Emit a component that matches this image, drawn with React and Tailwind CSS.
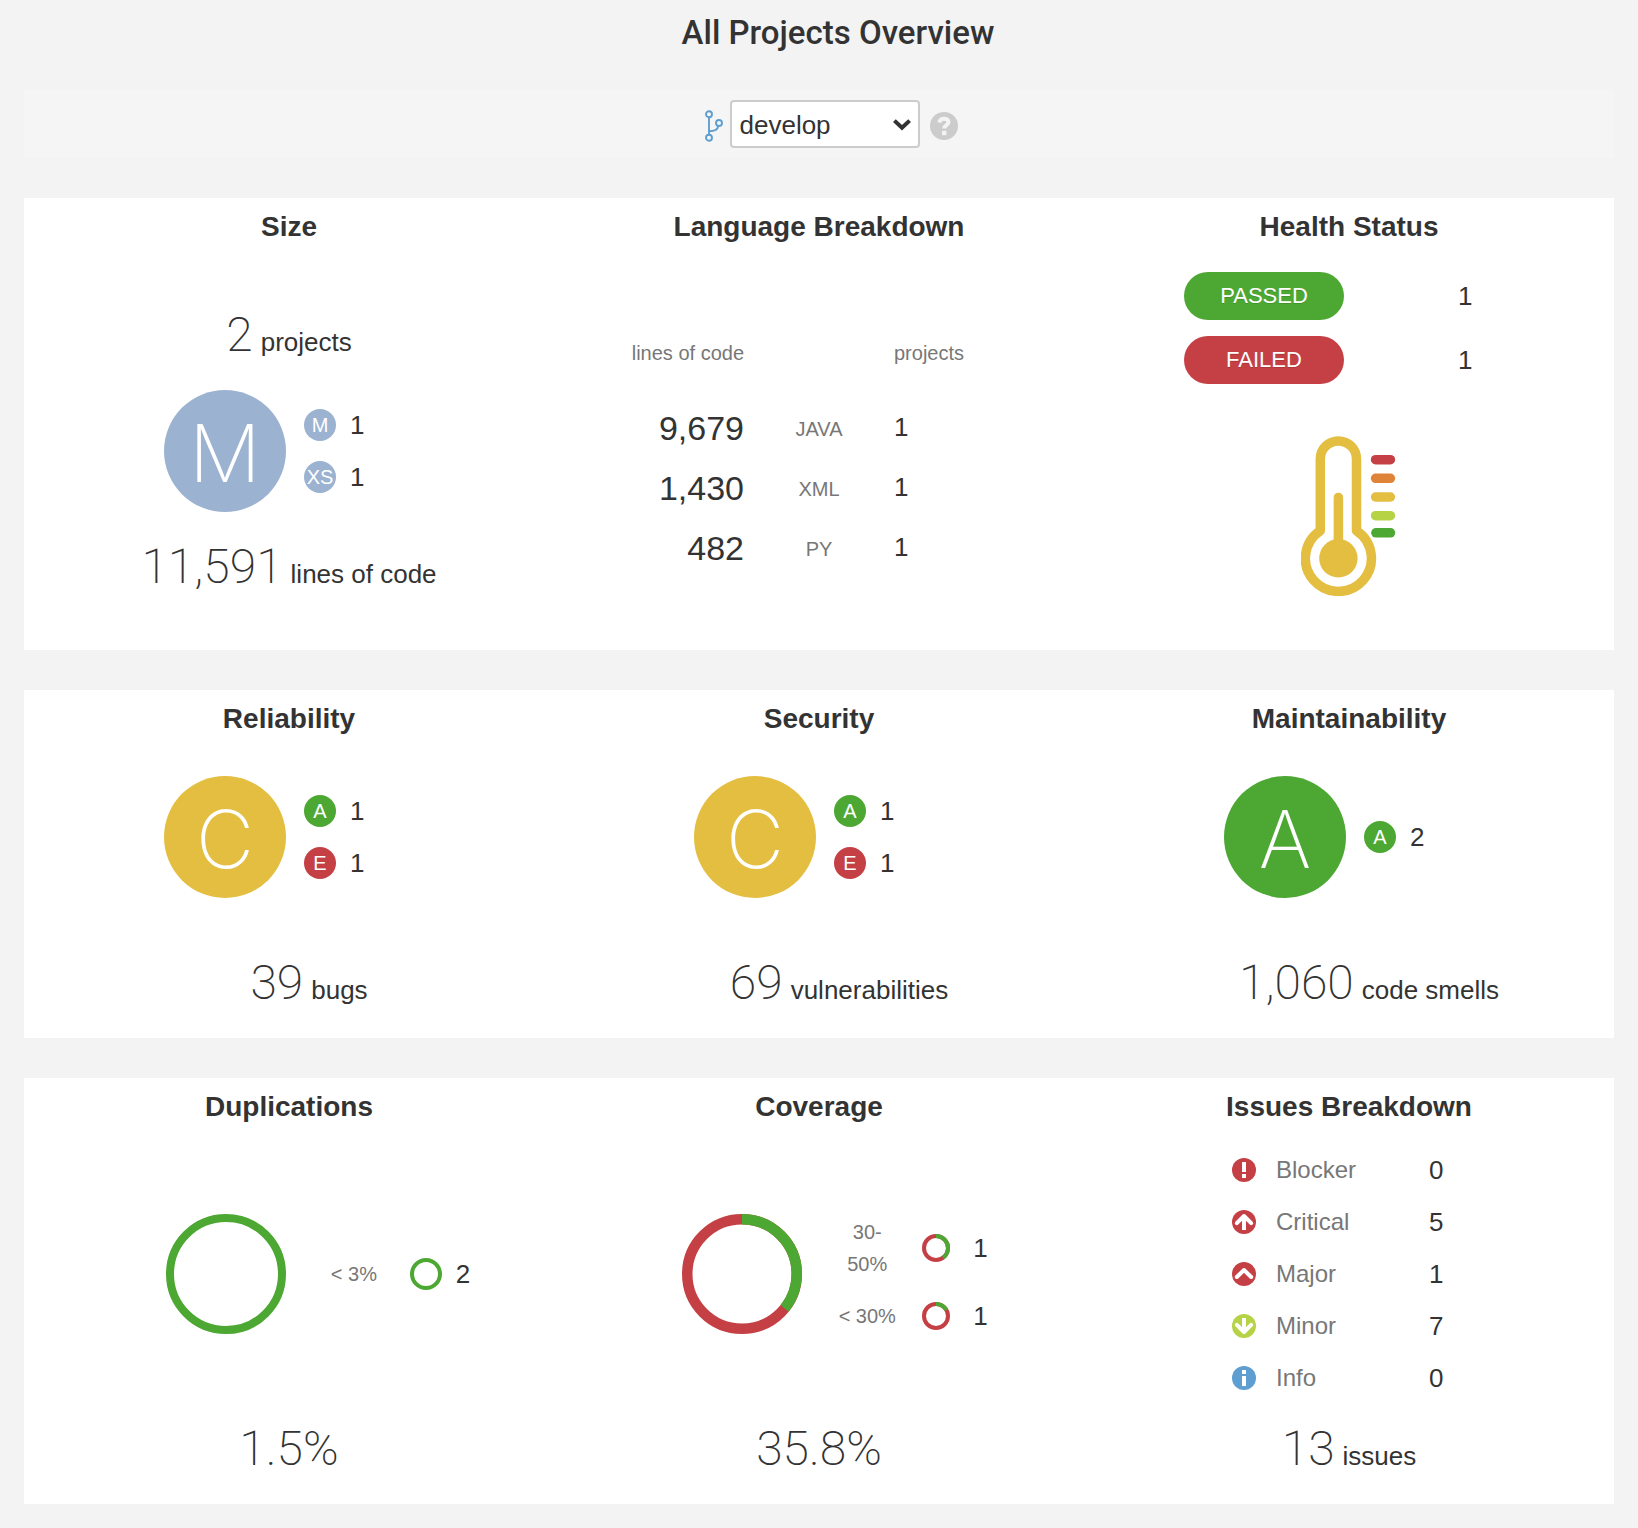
import React from "react";

const LETTER = "font-['Inter',sans-serif] font-extralight";
const NUMBER = "font-['Roboto',sans-serif] font-extralight";

function Panel({ children }) {
  return (
    <section className="grid grid-cols-3 bg-white pt-[11px] pb-[31px]">{children}</section>
  );
}

function Column({ title, children }) {
  return (
    <div className="flex flex-col items-center">
      <h2 className="text-[28px] leading-9 font-bold">{title}</h2>
      {children}
    </div>
  );
}

function Total({ value, unit, className = "" }) {
  return (
    <p className={`flex items-baseline justify-center gap-2 text-[26px] leading-8 whitespace-nowrap ${className}`}>
      <span className={`${NUMBER} text-[48px] leading-[48px]`}>{value}</span>
      {unit && <span>{unit}</span>}
    </p>
  );
}

const gradeColors = {
  A: "bg-[#4ca832]",
  C: "bg-[#e4be41]",
  E: "bg-[#c54045]",
  M: "bg-[#9bb2d1]",
  XS: "bg-[#9bb2d1]",
};

function Ratings({ grade, items }) {
  return (
    <div className="flex w-[250px] items-center gap-[18px]">
      <div
        className={`flex size-[122px] shrink-0 items-center justify-center rounded-full pt-[3px] text-[80px] leading-none text-white ${LETTER} ${gradeColors[grade]}`}
      >
        {grade}
      </div>
      <ul className="flex flex-col gap-5">
        {items.map(([letter, count]) => (
          <li key={letter} className="flex items-center gap-[14px]">
            <span
              className={`flex size-8 items-center justify-center rounded-full text-[20px] leading-8 text-white ${gradeColors[letter]}`}
            >
              {letter}
            </span>
            <span className="text-[26px] leading-8">{count}</span>
          </li>
        ))}
      </ul>
    </div>
  );
}

function Ring({ size, stroke, percent }) {
  const r = (size - stroke) / 2;
  const c = size / 2;
  return (
    <svg width={size} height={size} viewBox={`0 0 ${size} ${size}`} fill="none" className="shrink-0">
      <circle cx={c} cy={c} r={r} stroke="#c54045" strokeWidth={percent < 100 ? stroke : 0} />
      <circle
        cx={c}
        cy={c}
        r={r}
        stroke="#4ca832"
        strokeWidth={stroke}
        pathLength="100"
        strokeDasharray={percent < 100 ? `${percent} ${100 - percent}` : undefined}
        transform={`rotate(-90 ${c} ${c})`}
      />
    </svg>
  );
}

function Thermometer() {
  return (
    <svg width="96" height="160" viewBox="0 0 96 160" fill="none" strokeLinecap="round" strokeLinejoin="round">
      <g stroke="#e4be41" strokeWidth="9.5">
        <path d="M19.3 94.8V23a18.1 18.1 0 0 1 36.2 0v71.8a33 33 0 1 1-36.2 0Z" />
        <path d="M37.4 61.4V122" />
      </g>
      <circle cx="37.4" cy="122.3" r="19.2" fill="#e4be41" />
      <g strokeWidth="9.5">
        <path d="M74.6 23.7h14.8" stroke="#c54045" />
        <path d="M74.6 42.3h14.8" stroke="#df8338" />
        <path d="M74.6 61h14.8" stroke="#e4be41" />
        <path d="M74.6 79.7h14.8" stroke="#b6d345" />
        <path d="M74.9 96.8h14.6" stroke="#4ca832" />
      </g>
    </svg>
  );
}

function BranchIcon() {
  return (
    <svg className="mt-1" width="18" height="32" viewBox="0 0 18 32" fill="none" stroke="#5f9ed0" strokeWidth="1.9">
      <circle cx="4" cy="4.2" r="3" />
      <circle cx="4" cy="27.8" r="3" />
      <circle cx="14" cy="13" r="3" />
      <path d="M4 7.2v17.6M4 21.3c5.200 0 8.800-1.300 9.300-5.400" />
    </svg>
  );
}

function SeverityIcon({ type }) {
  const fills = {
    Blocker: "#c54045",
    Critical: "#c54045",
    Major: "#c54045",
    Minor: "#b6d345",
    Info: "#5f9ed0",
  };
  return (
    <svg width="24" height="24" viewBox="0 0 24 24" fill="none">
      <circle cx="12" cy="12" r="12" fill={fills[type]} />
      {type === "Blocker" && <path d="M10 4h4v10h-4zM10 16h4v4h-4z" fill="#fff" />}
      {type === "Info" && <path d="M10 4h4v4h-4zM10 10h4v10h-4z" fill="#fff" />}
      {type === "Critical" && (
        <g stroke="#fff" strokeWidth="4" strokeLinejoin="round">
          <path d="M12 20V7" />
          <path d="M4.800 13.200L12 6L19.200 13.200" strokeLinecap="round" />
        </g>
      )}
      {type === "Major" && (
        <path d="M4.800 15L12 8L19.200 15" stroke="#fff" strokeWidth="4" strokeLinecap="round" strokeLinejoin="round" />
      )}
      {type === "Minor" && (
        <g stroke="#fff" strokeWidth="4" strokeLinejoin="round">
          <path d="M12 4V17" />
          <path d="M4.800 10.800L12 18L19.200 10.800" strokeLinecap="round" />
        </g>
      )}
    </svg>
  );
}

const languages = [
  ["9,679", "JAVA", 1],
  ["1,430", "XML", 1],
  ["482", "PY", 1],
];

const issues = [
  ["Blocker", 0],
  ["Critical", 5],
  ["Major", 1],
  ["Minor", 7],
  ["Info", 0],
];

export default function App() {
  return (
    <main className="min-h-screen bg-[#f3f3f3] px-6 pb-6 font-['Liberation_Sans',Arial,sans-serif] text-[#333]">
      <h1 className="pt-[15px] pl-[38px] text-center font-['Roboto',sans-serif] text-[33px] leading-9 font-medium">
        All Projects Overview
      </h1>

      <div className="mt-[38px] flex items-center justify-center bg-[#f5f5f5] pt-[11px] pb-[10px] pl-6">
        <BranchIcon />
        <div className="relative ml-[7px]">
          <select
            aria-label="Branch"
            defaultValue="develop"
            className="h-12 w-[190px] appearance-none rounded-[4px] border-2 border-[#ccc] bg-white pt-0.5 pl-2 text-[26px] leading-8"
          >
            <option>develop</option>
            <option>master</option>
          </select>
          <svg
            className="pointer-events-none absolute top-[18px] right-2"
            width="20"
            height="14"
            viewBox="0 0 20 14"
            fill="none"
            stroke="#333"
            strokeWidth="4"
          >
            <path d="M2.400 2.600L10 9.800L17.600 2.600" />
          </svg>
        </div>
        <button type="button" aria-label="Help" className="mt-1 ml-[10px]">
          <svg width="28" height="28" viewBox="0 0 28 28" fill="none">
            <circle cx="14" cy="14" r="14" fill="#ccc" />
            <path
              d="M9.200 10.400C9.900 7.800 11.600 6.700 14 6.700C16.600 6.700 18.500 8 18.500 10.200C18.500 13 14.300 12.800 14.300 16.600"
              stroke="#f4f4f4"
              strokeWidth="4"
            />
            <path d="M12 18.800h4.400v4.400H12z" fill="#f4f4f4" />
          </svg>
        </button>
      </div>

      <div className="mt-10 flex flex-col gap-10">
        <Panel>
          <Column title="Size">
            <Total value="2" unit="projects" className="mt-[66px]" />
            <div className="mt-[31px]">
              <Ratings grade="M" items={[["M", 1], ["XS", 1]]} />
            </div>
            <Total value="11,591" unit="lines of code" className="mt-[31px] mb-7" />
          </Column>

          <Column title="Language Breakdown">
            <table className="mt-[83px] w-full table-fixed">
              <colgroup>
                <col />
                <col className="w-[150px]" />
                <col />
              </colgroup>
              <thead>
                <tr className="h-[70px] align-top text-[20px] leading-[50px] text-[#777]">
                  <th className="text-right font-normal">lines of code</th>
                  <th aria-label="language" />
                  <th className="text-left font-normal">projects</th>
                </tr>
              </thead>
              <tbody>
                {languages.map(([lines, name, count]) => (
                  <tr key={name} className="h-[60px]">
                    <td className="text-right text-[34px] leading-10">{lines}</td>
                    <td className="pt-0.5 text-center text-[20px] text-[#777]">{name}</td>
                    <td className="pb-0.5 text-left text-[26px] leading-8">{count}</td>
                  </tr>
                ))}
              </tbody>
            </table>
          </Column>

          <Column title="Health Status">
            <ul className="mt-[27px] flex w-[330px] flex-col gap-4">
              <li className="flex items-center justify-between">
                <span className="w-40 rounded-full bg-[#4ca832] text-center text-[22px] leading-[48px] text-white text-shadow-2xs">
                  PASSED
                </span>
                <span className="w-[56px] text-[26px] leading-8">1</span>
              </li>
              <li className="flex items-center justify-between">
                <span className="w-40 rounded-full bg-[#c54045] text-center text-[22px] leading-[48px] text-white text-shadow-2xs">
                  FAILED
                </span>
                <span className="w-[56px] text-[26px] leading-8">1</span>
              </li>
            </ul>
            <div className="mt-[52px]">
              <Thermometer />
            </div>
          </Column>
        </Panel>

        <Panel>
          <Column title="Reliability">
            <div className="flex h-[200px] items-center">
              <Ratings grade="C" items={[["A", 1], ["E", 1]]} />
            </div>
            <Total value="39" unit="bugs" className="mt-[22px] pl-10" />
          </Column>
          <Column title="Security">
            <div className="flex h-[200px] items-center">
              <Ratings grade="C" items={[["A", 1], ["E", 1]]} />
            </div>
            <Total value="69" unit="vulnerabilities" className="mt-[22px] pl-10" />
          </Column>
          <Column title="Maintainability">
            <div className="flex h-[200px] items-center">
              <Ratings grade="A" items={[["A", 2]]} />
            </div>
            <Total value="1,060" unit="code smells" className="mt-[22px] pl-10" />
          </Column>
        </Panel>

        <Panel>
          <Column title="Duplications">
            <div className="flex h-[298px] items-center pl-[58px]">
              <Ring size={120} stroke={8} percent={100} />
              <span className="ml-[45px] w-12 text-[20px] leading-8 whitespace-nowrap text-[#777]">&lt; 3%</span>
              <span className="mr-[14px] ml-[31px]">
                <Ring size={32} stroke={4} percent={100} />
              </span>
              <span className="text-[26px] leading-8">2</span>
            </div>
            <Total value="1.5%" className="mt-0.5" />
          </Column>

          <Column title="Coverage">
            <div className="flex h-[298px] items-center gap-[30px] pl-8">
              <Ring size={120} stroke={10.5} percent={35.8} />
              <ul className="flex flex-col gap-5">
                <li className="flex items-center">
                  <span className="w-[70px] text-center text-[20px] leading-8 text-[#777]">
                    30-
                    <br />
                    50%
                  </span>
                  <span className="mr-[23px] ml-5">
                    <Ring size={28} stroke={4} percent={40} />
                  </span>
                  <span className="text-[26px] leading-8">1</span>
                </li>
                <li className="flex items-center">
                  <span className="w-[70px] text-center text-[20px] leading-8 text-[#777]">&lt; 30%</span>
                  <span className="mr-[23px] ml-5">
                    <Ring size={28} stroke={4} percent={16.5} />
                  </span>
                  <span className="text-[26px] leading-8">1</span>
                </li>
              </ul>
            </div>
            <Total value="35.8%" className="mt-0.5" />
          </Column>

          <Column title="Issues Breakdown">
            <ul className="flex h-[298px] w-[234px] flex-col justify-center">
              {issues.map(([name, count]) => (
                <li key={name} className="flex h-[52px] items-center">
                  <SeverityIcon type={name} />
                  <span className="ml-5 w-[153px] text-[24px] leading-8 text-[#777]">{name}</span>
                  <span className="text-[26px] leading-8">{count}</span>
                </li>
              ))}
            </ul>
            <Total value="13" unit="issues" className="mt-0.5" />
          </Column>
        </Panel>
      </div>
    </main>
  );
}
